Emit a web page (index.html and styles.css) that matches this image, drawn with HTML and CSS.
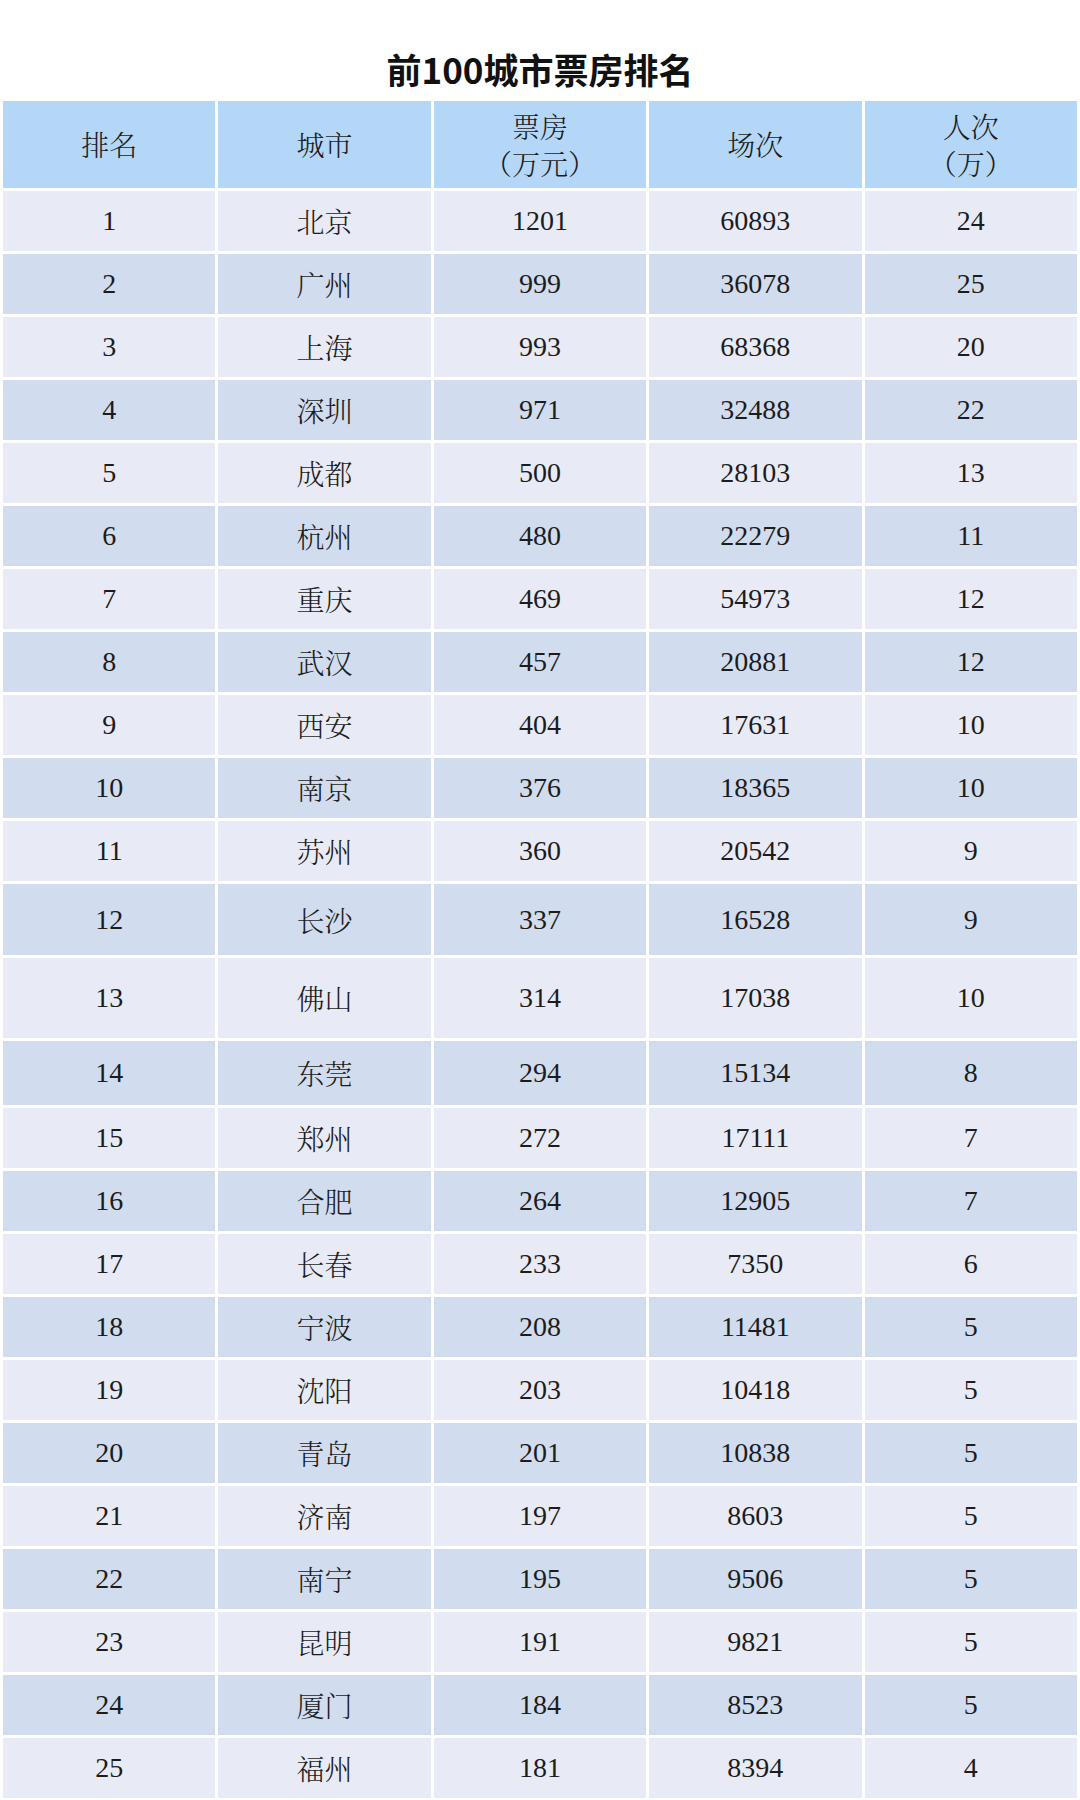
FILE: index.html
```html
<!DOCTYPE html>
<html lang="zh-CN">
<head>
<meta charset="utf-8">
<title>前100城市票房排名</title>
<link rel="stylesheet" href="styles.css">
</head>
<body>
<h1 class="title">前100城市票房排名</h1>
<table class="rank-table">
  <thead>
    <tr>
      <th>排名</th>
      <th>城市</th>
      <th><span class="line">票房</span><span class="line">（万元）</span></th>
      <th>场次</th>
      <th><span class="line">人次</span><span class="line">（万）</span></th>
    </tr>
  </thead>
  <tbody>
    <tr class="odd"><td>1</td><td class="city">北京</td><td>1201</td><td>60893</td><td>24</td></tr>
    <tr class="even"><td>2</td><td class="city">广州</td><td>999</td><td>36078</td><td>25</td></tr>
    <tr class="odd"><td>3</td><td class="city">上海</td><td>993</td><td>68368</td><td>20</td></tr>
    <tr class="even"><td>4</td><td class="city">深圳</td><td>971</td><td>32488</td><td>22</td></tr>
    <tr class="odd"><td>5</td><td class="city">成都</td><td>500</td><td>28103</td><td>13</td></tr>
    <tr class="even"><td>6</td><td class="city">杭州</td><td>480</td><td>22279</td><td>11</td></tr>
    <tr class="odd"><td>7</td><td class="city">重庆</td><td>469</td><td>54973</td><td>12</td></tr>
    <tr class="even"><td>8</td><td class="city">武汉</td><td>457</td><td>20881</td><td>12</td></tr>
    <tr class="odd"><td>9</td><td class="city">西安</td><td>404</td><td>17631</td><td>10</td></tr>
    <tr class="even"><td>10</td><td class="city">南京</td><td>376</td><td>18365</td><td>10</td></tr>
    <tr class="odd"><td>11</td><td class="city">苏州</td><td>360</td><td>20542</td><td>9</td></tr>
    <tr class="even tall-a"><td>12</td><td class="city">长沙</td><td>337</td><td>16528</td><td>9</td></tr>
    <tr class="odd tall-b"><td>13</td><td class="city">佛山</td><td>314</td><td>17038</td><td>10</td></tr>
    <tr class="even tall-c"><td>14</td><td class="city">东莞</td><td>294</td><td>15134</td><td>8</td></tr>
    <tr class="odd"><td>15</td><td class="city">郑州</td><td>272</td><td>17111</td><td>7</td></tr>
    <tr class="even"><td>16</td><td class="city">合肥</td><td>264</td><td>12905</td><td>7</td></tr>
    <tr class="odd"><td>17</td><td class="city">长春</td><td>233</td><td>7350</td><td>6</td></tr>
    <tr class="even"><td>18</td><td class="city">宁波</td><td>208</td><td>11481</td><td>5</td></tr>
    <tr class="odd"><td>19</td><td class="city">沈阳</td><td>203</td><td>10418</td><td>5</td></tr>
    <tr class="even"><td>20</td><td class="city">青岛</td><td>201</td><td>10838</td><td>5</td></tr>
    <tr class="odd"><td>21</td><td class="city">济南</td><td>197</td><td>8603</td><td>5</td></tr>
    <tr class="even"><td>22</td><td class="city">南宁</td><td>195</td><td>9506</td><td>5</td></tr>
    <tr class="odd"><td>23</td><td class="city">昆明</td><td>191</td><td>9821</td><td>5</td></tr>
    <tr class="even"><td>24</td><td class="city">厦门</td><td>184</td><td>8523</td><td>5</td></tr>
    <tr class="odd"><td>25</td><td class="city">福州</td><td>181</td><td>8394</td><td>4</td></tr>
  </tbody>
</table>
</body>
</html>
```
FILE: styles.css
```css
html, body {
  margin: 0;
  padding: 0;
  background: #ffffff;
}

body {
  width: 1080px;
  color: #1c1c1c;
  font-family: "Liberation Serif", "Noto Serif CJK SC", "Noto Sans CJK SC", serif;
}

.title {
  margin: 0;
  padding: 49px 0 9px;
  height: 40px;
  line-height: 40px;
  text-align: center;
  font-family: "Noto Sans CJK SC", "Noto Sans", sans-serif;
  font-weight: 700;
  font-size: 35px;
  color: #111111;
}

.rank-table {
  width: 1080px;
  table-layout: fixed;
  border-collapse: separate;
  border-spacing: 3px;
  font-size: 28px;
  font-weight: 400;
}

.rank-table th,
.rank-table td {
  padding: 0;
  text-align: center;
  vertical-align: middle;
}

.rank-table th {
  height: 87px;
  background: #b4d7f8;
  font-family: "Noto Serif CJK SC", "Noto Sans CJK SC", serif;
  font-weight: 300;
  line-height: 37px;
}

.rank-table th .line {
  display: block;
}

.rank-table td {
  height: 60px;
}

.rank-table td.city {
  font-family: "Noto Serif CJK SC", "Noto Sans CJK SC", serif;
  font-weight: 300;
}

.rank-table tr.odd td {
  background: #e8ebf5;
}

.rank-table tr.even td {
  background: #d1ddee;
}

.rank-table tr.tall-a td {
  height: 71px;
}

.rank-table tr.tall-b td {
  height: 80px;
}

.rank-table tr.tall-c td {
  height: 64px;
}
```
